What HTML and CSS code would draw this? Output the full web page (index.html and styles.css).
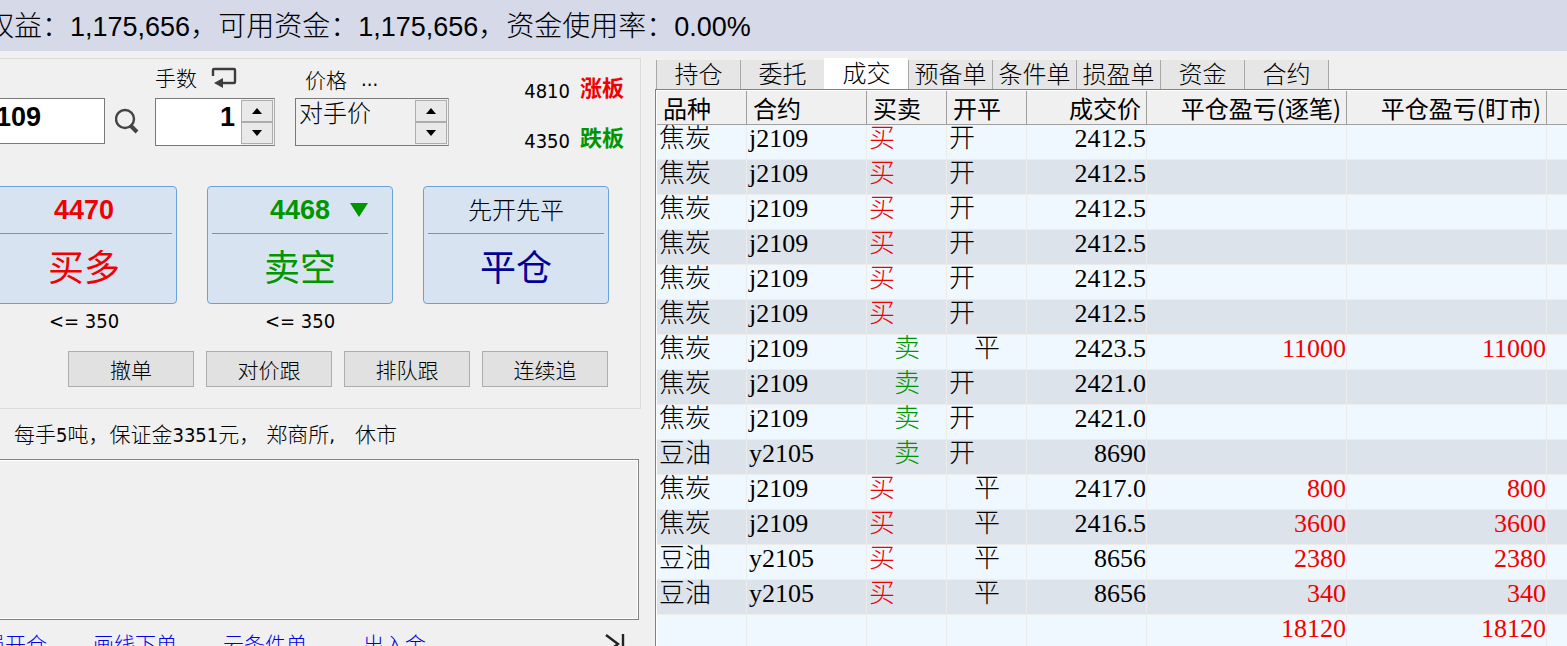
FILE: index.html
```html
<!DOCTYPE html>
<html lang="zh-CN">
<head>
    <meta charset="UTF-8">
    <meta name="viewport" content="width=device-width, initial-scale=1.0">
    <title>期货交易</title>
    <link rel="stylesheet" href="styles.css">
</head>
<body>
    <header class="account-bar">
        <p class="account-text">权益：<span class="num">1,175,656</span>，可用资金：<span class="num">1,175,656</span>，资金使用率：<span class="num">0.00%</span></p>
    </header>

    <main class="workspace">
        <section class="order-side">
            <div class="order-panel">
                <div class="fields">
                    <div class="contract">
                        <input type="text" class="contract-input" value="109" aria-label="合约">
                        <button class="icon-btn" aria-label="查找">
                            <svg width="26" height="28" viewBox="0 0 26 28" fill="none" stroke="#444">
                                <circle cx="10" cy="12" r="9" stroke-width="2.4"/>
                                <path d="M15 18l7 7" stroke-width="4"/>
                            </svg>
                        </button>
                    </div>

                    <div class="field field-qty">
                        <div class="field-label">
                            <label for="qty">手数</label>
                            <button class="icon-btn" aria-label="切换手数">
                                <svg width="26" height="22" viewBox="0 0 26 22" fill="none" stroke="#3c3c3c" stroke-width="2.4">
                                    <path d="M2 10V4q0-1 1-1h20q1 0 1 1v12q0 1-1 1H10"/>
                                    <path d="M3 17l9-5v10z" fill="#3c3c3c" stroke="none"/>
                                </svg>
                            </button>
                        </div>
                        <div class="spin">
                            <input type="text" id="qty" class="spin-input qty-input" value="1">
                            <div class="spin-btns">
                                <button class="spin-btn" aria-label="增加手数"><svg width="12" height="6" viewBox="0 0 12 6"><path d="M6 0l5 6H1z"/></svg></button>
                                <button class="spin-btn" aria-label="减少手数"><svg width="12" height="6" viewBox="0 0 12 6"><path d="M1 0h10L6 6z"/></svg></button>
                            </div>
                        </div>
                    </div>

                    <div class="field field-price">
                        <div class="field-label">
                            <label for="price">价格</label>
                            <button class="icon-btn more">...</button>
                        </div>
                        <div class="spin">
                            <input type="text" id="price" class="spin-input price-input" value="对手价">
                            <div class="spin-btns">
                                <button class="spin-btn" aria-label="提高价格"><svg width="12" height="6" viewBox="0 0 12 6"><path d="M6 0l5 6H1z"/></svg></button>
                                <button class="spin-btn" aria-label="降低价格"><svg width="12" height="6" viewBox="0 0 12 6"><path d="M1 0h10L6 6z"/></svg></button>
                            </div>
                        </div>
                    </div>

                    <div class="limits">
                        <p class="limit">4810<strong class="red">涨板</strong></p>
                        <p class="limit">4350<strong class="green">跌板</strong></p>
                    </div>
                </div>

                <div class="trade-row">
                    <div class="trade-item">
                        <button class="trade-btn red">
                            <span class="trade-price">4470</span>
                            <span class="trade-name">买多</span>
                        </button>
                        <p class="trade-max">&lt;= 350</p>
                    </div>
                    <div class="trade-item">
                        <button class="trade-btn green">
                            <span class="trade-price">4468<svg class="down" width="18" height="14" viewBox="0 0 18 14"><path d="M0 0h18L9 14z" fill="currentColor"/></svg></span>
                            <span class="trade-name">卖空</span>
                        </button>
                        <p class="trade-max">&lt;= 350</p>
                    </div>
                    <div class="trade-item">
                        <button class="trade-btn navy">
                            <span class="trade-price trade-mode">先开先平</span>
                            <span class="trade-name">平仓</span>
                        </button>
                    </div>
                </div>

                <div class="action-row">
                    <button class="action-btn">撤单</button>
                    <button class="action-btn">对价跟</button>
                    <button class="action-btn">排队跟</button>
                    <button class="action-btn">连续追</button>
                </div>
            </div>

            <p class="contract-info"><span>每手<b>5</b>吨，保证金<b>3351</b>元，</span><span>郑商所<b>,</b></span><span class="market-state">休市</span></p>

            <div class="message-box"></div>

            <nav class="links">
                <a href="#">损开仓</a>
                <a href="#">画线下单</a>
                <a href="#">云条件单</a>
                <a href="#">出入金</a>
                <button class="icon-btn collapse" aria-label="收起">
                    <svg width="20" height="22" viewBox="0 0 20 22" fill="none" stroke="#222" stroke-width="2.4">
                        <path d="M1 3l12 9-12 9M18 2v20"/>
                    </svg>
                </button>
            </nav>
        </section>

        <section class="records">
            <div class="tabs">
                <button class="tab">持仓</button>
                <button class="tab">委托</button>
                <button class="tab active">成交</button>
                <button class="tab">预备单</button>
                <button class="tab">条件单</button>
                <button class="tab">损盈单</button>
                <button class="tab">资金</button>
                <button class="tab">合约</button>
            </div>
            <div class="table-wrap">
                <table class="deals">
                    <colgroup>
                        <col class="c-name"><col class="c-code"><col class="c-side"><col class="c-side">
                        <col class="c-code"><col class="c-profit"><col class="c-profit"><col>
                    </colgroup>
                    <thead>
                        <tr><th>品种</th><th>合约</th><th>买卖</th><th>开平</th><th class="r">成交价</th><th class="r">平仓盈亏(逐笔)</th><th class="r">平仓盈亏(盯市)</th><th></th></tr>
                    </thead>
                    <tbody>
                        <tr><td>焦炭</td><td>j2109</td><td class="red">买</td><td>开</td><td class="r">2412.5</td><td></td><td></td><td></td></tr>
                        <tr><td>焦炭</td><td>j2109</td><td class="red">买</td><td>开</td><td class="r">2412.5</td><td></td><td></td><td></td></tr>
                        <tr><td>焦炭</td><td>j2109</td><td class="red">买</td><td>开</td><td class="r">2412.5</td><td></td><td></td><td></td></tr>
                        <tr><td>焦炭</td><td>j2109</td><td class="red">买</td><td>开</td><td class="r">2412.5</td><td></td><td></td><td></td></tr>
                        <tr><td>焦炭</td><td>j2109</td><td class="red">买</td><td>开</td><td class="r">2412.5</td><td></td><td></td><td></td></tr>
                        <tr><td>焦炭</td><td>j2109</td><td class="red">买</td><td>开</td><td class="r">2412.5</td><td></td><td></td><td></td></tr>
                        <tr><td>焦炭</td><td>j2109</td><td class="green in">卖</td><td class="in">平</td><td class="r">2423.5</td><td class="r red">11000</td><td class="r red">11000</td><td></td></tr>
                        <tr><td>焦炭</td><td>j2109</td><td class="green in">卖</td><td>开</td><td class="r">2421.0</td><td></td><td></td><td></td></tr>
                        <tr><td>焦炭</td><td>j2109</td><td class="green in">卖</td><td>开</td><td class="r">2421.0</td><td></td><td></td><td></td></tr>
                        <tr><td>豆油</td><td>y2105</td><td class="green in">卖</td><td>开</td><td class="r">8690</td><td></td><td></td><td></td></tr>
                        <tr><td>焦炭</td><td>j2109</td><td class="red">买</td><td class="in">平</td><td class="r">2417.0</td><td class="r red">800</td><td class="r red">800</td><td></td></tr>
                        <tr><td>焦炭</td><td>j2109</td><td class="red">买</td><td class="in">平</td><td class="r">2416.5</td><td class="r red">3600</td><td class="r red">3600</td><td></td></tr>
                        <tr><td>豆油</td><td>y2105</td><td class="red">买</td><td class="in">平</td><td class="r">8656</td><td class="r red">2380</td><td class="r red">2380</td><td></td></tr>
                        <tr><td>豆油</td><td>y2105</td><td class="red">买</td><td class="in">平</td><td class="r">8656</td><td class="r red">340</td><td class="r red">340</td><td></td></tr>
                        <tr><td></td><td></td><td></td><td></td><td></td><td class="r red">18120</td><td class="r red">18120</td><td></td></tr>
                    </tbody>
                </table>
            </div>
        </section>
    </main>
</body>
</html>
```
FILE: styles.css
```css
* {
    box-sizing: border-box;
}
body {
    margin: 0;
    height: 100vh;
    display: flex;
    flex-direction: column;
    overflow: hidden;
    background: #f0f0f0;
    color: #000;
    font-family: "DejaVu Sans Condensed", "Noto Sans CJK SC", sans-serif;
    font-size: 20px;
    font-weight: 300;
}
p {
    margin: 0;
}
button,
input {
    font: inherit;
    color: inherit;
    padding: 0;
    border-radius: 0;
}
svg {
    display: block;
}
.red {
    color: #f00000;
}
.green {
    color: #009600;
}
.navy {
    color: #000096;
}

/* account summary */
.account-bar {
    flex: none;
    height: 51px;
    background: #d5d9e8;
    overflow: hidden;
}
.account-text {
    margin-left: -14px;
    font-family: "Noto Sans CJK SC", sans-serif;
    font-size: 28px;
    line-height: 48px;
    white-space: nowrap;
}
.num {
    font-family: "Liberation Sans", Arial, sans-serif;
    font-size: 27px;
    font-weight: 400;
}

.workspace {
    flex: 1;
    min-height: 0;
    display: grid;
    grid-template-columns: 655px 1fr;
}

/* order entry, runs off the left edge of the window */
.order-side {
    margin-left: -20px;
    padding: 7px 14px 0 0;
    min-width: 0;
}
.order-panel {
    height: 351px;
    border: 1px solid #dcdcdc;
}
.fields {
    display: flex;
    height: 127px;
}
.contract {
    display: flex;
    align-items: center;
    gap: 10px;
    height: 46px;
    margin-top: 39px;
}
.contract-input {
    width: 124px;
    height: 46px;
    padding: 0 0 8px 14px;
    border: 1px solid #7a7a7a;
    background: #fff;
    font-family: "Liberation Sans", Arial, sans-serif;
    font-size: 27px;
    font-weight: bold;
}
.icon-btn {
    border: none;
    background: none;
}
.field {
    padding-top: 4px;
}
.field-qty {
    margin-left: 14px;
}
.field-price {
    margin-left: 20px;
}
.field-label {
    display: flex;
    align-items: center;
    gap: 14px;
    height: 35px;
    padding-bottom: 8px;
}
.field-price .field-label {
    padding: 0 0 4px 10px;
}
.field-label label {
    font-size: 21px;
}
.more {
    font-weight: 400;
}
.spin {
    display: flex;
    height: 48px;
    border: 1px solid #7a7a7a;
    border-right-color: #adadad;
}
.spin-input {
    border: none;
    min-width: 0;
}
.qty-input {
    width: 85px;
    padding: 0 6px 10px 0;
    background: #fff;
    font-family: "Liberation Sans", Arial, sans-serif;
    font-size: 27px;
    font-weight: bold;
    text-align: right;
}
.price-input {
    width: 119px;
    padding: 0 0 16px 3px;
    background: #f0f0f0;
    font-size: 24px;
    line-height: 28px;
}
.spin-btns {
    display: flex;
    flex-direction: column;
    width: 33px;
    padding: 1px 1px 1px 0;
}
.spin-btn {
    flex: 1;
    display: flex;
    align-items: center;
    justify-content: center;
    border: 1px solid #adadad;
    background: #e9e9e9;
}
.limits {
    margin-left: auto;
    padding: 17px 16px 0 0;
}
.limit {
    display: flex;
    align-items: center;
    gap: 10px;
    height: 30px;
    margin-bottom: 20px;
    font-weight: 400;
}
.limit strong {
    font-size: 22px;
    line-height: 30px;
    height: 34px;
}

/* buy / sell / close */
.trade-row {
    display: flex;
    gap: 30px;
    padding-left: 10px;
}
.trade-item {
    width: 186px;
}
.trade-btn {
    display: block;
    width: 100%;
    height: 118px;
    padding: 0 4px;
    border: 1px solid #6aa1d8;
    border-radius: 4px;
    background: #d8e3f1;
}
.trade-price {
    display: flex;
    align-items: center;
    justify-content: center;
    position: relative;
    height: 47px;
    border-bottom: 1px solid #909090;
    font-family: "Liberation Sans", Arial, "Noto Sans CJK SC", sans-serif;
    font-size: 27px;
    font-weight: bold;
}
.trade-mode {
    padding-bottom: 4px;
    color: #000;
    font-size: 24px;
    font-weight: 300;
}
.down {
    position: absolute;
    right: 20px;
}
.trade-name {
    display: block;
    height: 69px;
    line-height: 69px;
    font-size: 36px;
    font-weight: 400;
}
.trade-max {
    line-height: 34px;
    text-align: center;
    font-weight: 400;
}
.action-row {
    display: flex;
    gap: 12px;
    margin-top: 13px;
    padding-left: 87px;
}
.action-btn {
    width: 126px;
    height: 36px;
    border: 1px solid #adadad;
    background: #e1e1e1;
    font-size: 21px;
}

.contract-info {
    display: flex;
    gap: 6px;
    height: 50px;
    padding-left: 34px;
    font-size: 21px;
    line-height: 52px;
    white-space: nowrap;
}
.contract-info b {
    font-size: 20px;
    font-weight: 500;
}
.market-state {
    margin-left: 14px;
}
.message-box {
    height: 161px;
    margin-right: 2px;
    border: 1px solid #828282;
    box-shadow: inset 0 0 0 1px #fff;
}
.links {
    display: flex;
    align-items: center;
    gap: 46px;
    height: 46px;
    padding-left: 4px;
    font-size: 21px;
    white-space: nowrap;
}
.links a {
    color: #0000f0;
    text-decoration: none;
}
.links a:nth-child(4) {
    margin-left: 10px;
}
.collapse {
    margin: 0 16px 0 auto;
}

/* deal records */
.records {
    min-width: 0;
    padding-top: 7px;
    display: flex;
    flex-direction: column;
}
.tabs {
    display: flex;
    align-items: flex-end;
    height: 31px;
    padding-left: 1px;
}
.tab {
    width: 84px;
    height: 29px;
    border: none;
    border-left: 1px solid #a8a8a8;
    background: #e6e6e6;
    font-size: 24px;
    line-height: 28px;
    white-space: nowrap;
}
.tab:last-child {
    width: 85px;
    border-right: 1px solid #a8a8a8;
}
.tab.active {
    height: 31px;
    border-left-color: #fff;
    background: #fff;
}
.table-wrap {
    flex: 1;
    min-height: 0;
    overflow: hidden;
    border-top: 1px solid #828282;
    border-left: 1px solid #828282;
    background: #fff;
    padding: 1px 0 0 1px;
}
.deals {
    width: 100%;
    table-layout: fixed;
    border-collapse: separate;
    border-spacing: 0;
}
.c-name {
    width: 90px;
}
.c-code {
    width: 120px;
}
.c-side {
    width: 80px;
}
.c-profit {
    width: 200px;
}
.deals th {
    height: 34px;
    padding: 0 6px;
    border-right: 1px solid #a0a0a0;
    border-bottom: 1px solid #a0a0a0;
    background: #f0f0f0;
    font-family: "Noto Sans CJK SC", sans-serif;
    font-size: 24px;
    font-weight: 400;
    line-height: 32px;
    text-align: left;
    white-space: nowrap;
}
.deals td {
    height: 35px;
    padding: 0 2px;
    border-right: 1px solid #ececec;
    border-bottom: 1px solid #ececec;
    font-family: "Liberation Serif", "Noto Sans CJK SC", serif;
    font-size: 26px;
    line-height: 28px;
    vertical-align: top;
    white-space: nowrap;
}
.deals th:last-child,
.deals td:last-child {
    border-right: none;
}
.deals tbody tr:nth-child(odd) {
    background: #f0f8ff;
}
.deals tbody tr:nth-child(even) {
    background: #dde3eb;
}
.deals .r {
    text-align: right;
}
.deals th.r {
    padding-right: 5px;
}
.deals td.r {
    padding-right: 0;
}
.deals .in {
    padding-left: 27px;
}
```
